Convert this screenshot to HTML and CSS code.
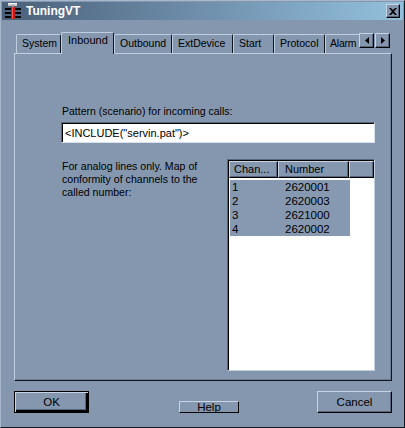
FILE: index.html
```html
<!DOCTYPE html>
<html>
<head>
<meta charset="utf-8">
<title>TuningVT</title>
<link rel="stylesheet" href="styles.css">
</head>
<body>
<div class="window">
  <div class="titlebar">
    <svg class="appicon" width="16" height="16" viewBox="0 0 16 16">
      <rect x="3" y="0" width="9" height="3" fill="#c8c8c8"/>
      <rect x="3" y="0" width="9" height="1" fill="#ffffff"/>
      <rect x="7" y="2" width="2" height="4" fill="#9a9a9a"/>
      <rect x="0" y="5" width="16" height="2" fill="#000"/>
      <rect x="0" y="9" width="16" height="2" fill="#000"/>
      <rect x="0" y="13" width="16" height="2" fill="#000"/>
      <rect x="6" y="4" width="4" height="12" fill="#c81818"/>
      <rect x="7" y="4" width="1" height="12" fill="#ff5050"/>
    </svg>
    <span class="title">TuningVT</span>
    <button class="close">
      <svg width="8" height="7" viewBox="0 0 8 7"><path d="M0 0h2l2 2 2-2h2L5 3.5 8 7H6L4 5 2 7H0l3-3.5z" fill="#000"/></svg>
    </button>
  </div>

  <div class="tabrow">
    <div class="tabs">
      <div class="tab tab-system">System</div>
      <div class="tab tab-active tab-inbound">Inbound</div>
      <div class="tab tab-outbound">Outbound</div>
      <div class="tab tab-ext">ExtDevice</div>
      <div class="tab tab-start">Start</div>
      <div class="tab tab-protocol">Protocol</div>
      <div class="tab tab-alarm">Alarm</div>
    </div>
    <div class="arrows">
      <button class="arrow"><svg width="4" height="7" viewBox="0 0 4 7"><path d="M4 0v7L0 3.5z" fill="#000"/></svg></button>
      <button class="arrow"><svg width="4" height="7" viewBox="0 0 4 7"><path d="M0 0v7l4-3.5z" fill="#000"/></svg></button>
    </div>
  </div>

  <div class="panel">
    <div class="field-label">Pattern (scenario) for incoming calls:</div>
    <div class="textbox">&lt;INCLUDE("servin.pat")&gt;</div>
    <div class="map">
      <div class="map-text">For analog lines only. Map of<br>conformity of channels to the<br>called number:</div>
      <div class="listview">
        <div class="lv-header">
          <div class="hcell col1">Chan...</div>
          <div class="hcell col2">Number</div>
          <div class="hcell col3"></div>
        </div>
        <div class="lv-rows">
          <div class="lv-row"><span class="c1">1</span><span class="c2">2620001</span></div>
          <div class="lv-row"><span class="c1">2</span><span class="c2">2620003</span></div>
          <div class="lv-row"><span class="c1">3</span><span class="c2">2621000</span></div>
          <div class="lv-row"><span class="c1">4</span><span class="c2">2620002</span></div>
        </div>
      </div>
    </div>
  </div>

  <div class="buttons">
    <button class="btn btn-default">OK</button>
    <button class="btn btn-help"><span>Help</span></button>
    <button class="btn btn-cancel">Cancel</button>
  </div>
</div>
</body>
</html>
```

FILE: styles.css
```css
* { box-sizing: border-box; }

html, body {
  margin: 0;
  padding: 0;
  background: #8497af;
}

body {
  font-family: "Liberation Sans", Arial, sans-serif;
  font-size: 11px;
  color: #000;
}

.window {
  width: 405px;
  height: 428px;
  background: #8497af;
  border-top: 1px solid #a8b8cc;
  border-left: 1px solid #a8b8cc;
  border-right: 1px solid #10151c;
  border-bottom: 1px solid #10151c;
  padding: 1px;
  display: flex;
  flex-direction: column;
  overflow: hidden;
}

/* Title bar */
.titlebar {
  height: 18px;
  display: flex;
  align-items: center;
  background: linear-gradient(to right, #4b6079 0%, #6f8fac 50%, #93c1dd 100%);
  padding: 0 3px 0 3px;
}

.appicon {
  flex: 0 0 auto;
  display: block;
}

.title {
  margin-left: 5px;
  color: #fff;
  font-weight: bold;
  font-size: 12px;
  line-height: 14px;
  flex: 1 1 auto;
}

.close {
  width: 14px;
  height: 14px;
  padding: 0;
  margin: 0;
  background: #8497af;
  border-top: 1px solid #c6d4e4;
  border-left: 1px solid #c6d4e4;
  border-right: 1px solid #000;
  border-bottom: 1px solid #000;
  box-shadow: inset -1px -1px 0 #56667c;
  display: flex;
  align-items: center;
  justify-content: center;
}
.close svg { display: block; }

/* Tabs */
.tabrow {
  margin-top: 12px;
  height: 21px;
  display: flex;
  align-items: flex-start;
  padding-left: 14px;
  position: relative;
  z-index: 2;
}

.tabs {
  width: 343px;
  height: 22px;
  display: flex;
  align-items: flex-end;
  overflow: hidden;
  flex: 0 0 auto;
}

.tab {
  height: 19px;
  padding: 2px 0 0 5px;
  font-size: 10.5px;
  line-height: 13px;
  white-space: nowrap;
  border-top: 1px solid #c0cfe0;
  border-left: 1px solid #c0cfe0;
  border-right: 1px solid #10151c;
  border-radius: 2px 2px 0 0;
  background: #8497af;
  flex: 0 0 auto;
  margin-bottom: 1px;
}

.tab-active {
  height: 22px;
  padding-top: 1px;
  padding-left: 6px;
  margin-bottom: 0;
  border-bottom: 0;
  font-size: 11px;
}

.tab-system { width: 45px; }
.tab-inbound { width: 53px; }
.tab-outbound { width: 58px; }
.tab-ext { width: 61px; }
.tab-start { width: 41px; }
.tab-protocol { width: 51px; }
.tab-alarm { width: 44px; padding-left: 4px; letter-spacing: -0.2px; }

.arrows {
  display: flex;
  gap: 1px;
  margin-top: 1px;
  margin-left: 0;
}

.arrow {
  width: 15px;
  height: 15px;
  padding: 0;
  margin: 0;
  background: #8497af;
  border-top: 1px solid #c6d4e4;
  border-left: 1px solid #c6d4e4;
  border-right: 1px solid #000;
  border-bottom: 1px solid #000;
  box-shadow: inset -1px -1px 0 #56667c;
  display: flex;
  align-items: center;
  justify-content: center;
}
.arrow svg { display: block; }

/* Panel */
.panel {
  margin-left: 12px;
  width: 378px;
  height: 328px;
  border-top: 1px solid #c0cfe0;
  border-left: 1px solid #c0cfe0;
  border-right: 1px solid #10151c;
  border-bottom: 1px solid #10151c;
  box-shadow: inset -1px -1px 0 #6c7c92;
  padding: 51px 16px 0 47px;
  position: relative;
  z-index: 1;
}

.field-label {
  line-height: 13px;
  height: 13px;
  font-size: 10.5px;
  white-space: nowrap;
}

.textbox {
  margin: 4px 0 0 -1px;
  height: 21px;
  background: #fff;
  border-top: 1px solid #56667c;
  border-left: 1px solid #56667c;
  border-right: 1px solid #d8e2ee;
  border-bottom: 1px solid #d8e2ee;
  box-shadow: inset 1px 1px 0 #000;
  padding: 3px 0 0 3px;
  font-size: 11px;
  line-height: 15px;
  white-space: nowrap;
}

.map {
  margin-top: 16px;
  display: flex;
  justify-content: space-between;
  align-items: flex-start;
}

.map-text {
  margin-top: 1px;
  line-height: 13px;
  font-size: 10.6px;
  white-space: nowrap;
}

.listview {
  width: 148px;
  height: 212px;
  background: #fff;
  border-top: 1px solid #56667c;
  border-left: 1px solid #56667c;
  border-right: 1px solid #c0cfe0;
  border-bottom: 1px solid #c0cfe0;
  box-shadow: inset 1px 1px 0 #000;
  padding: 1px 0 0 1px;
}

.lv-header {
  display: flex;
  height: 17px;
}

.hcell {
  height: 17px;
  background: #8497af;
  border-top: 1px solid #c6d4e4;
  border-left: 1px solid #c6d4e4;
  border-right: 1px solid #000;
  border-bottom: 1px solid #000;
  box-shadow: inset -1px -1px 0 #56667c;
  line-height: 14px;
  padding-left: 4px;
  white-space: nowrap;
  font-size: 11px;
}
.col1 { width: 49px; }
.col2 { width: 71px; padding-left: 6px; }
.col3 { flex: 1 1 auto; }

.lv-rows {
  margin-top: 2px;
  margin-left: 1px;
  width: 120px;
  background: #8699b1;
}

.lv-row {
  height: 14px;
  line-height: 14px;
  display: flex;
  font-size: 11.5px;
}
.lv-row .c1 { width: 55px; padding-left: 2px; }
.lv-row .c2 { flex: 1 1 auto; }

/* Buttons */
.buttons {
  margin-top: 10px;
  padding-left: 12px;
  display: flex;
  align-items: flex-start;
}

.btn {
  font-family: "Liberation Sans", Arial, sans-serif;
  font-size: 11.5px;
  color: #000;
  width: 75px;
  height: 22px;
  padding: 0;
  margin: 0;
  background: #8497af;
  border-top: 1px solid #c6d4e4;
  border-left: 1px solid #c6d4e4;
  border-right: 1px solid #000;
  border-bottom: 1px solid #000;
  box-shadow: inset -1px -1px 0 #56667c;
  line-height: 18px;
  text-align: center;
}

.btn-default {
  border: 1px solid #000;
  box-shadow: inset 1px 1px 0 #c6d4e4, inset -2px -2px 0 #000, inset -3px -3px 0 #56667c;
}

.btn-help {
  width: 60px;
  height: 12px;
  margin-top: 10px;
  margin-left: 90px;
  overflow: hidden;
  line-height: 13px;
  box-shadow: none;
}
.btn-help span { display: block; margin-top: -1px; }

.btn-cancel {
  margin-left: 78px;
}
```
